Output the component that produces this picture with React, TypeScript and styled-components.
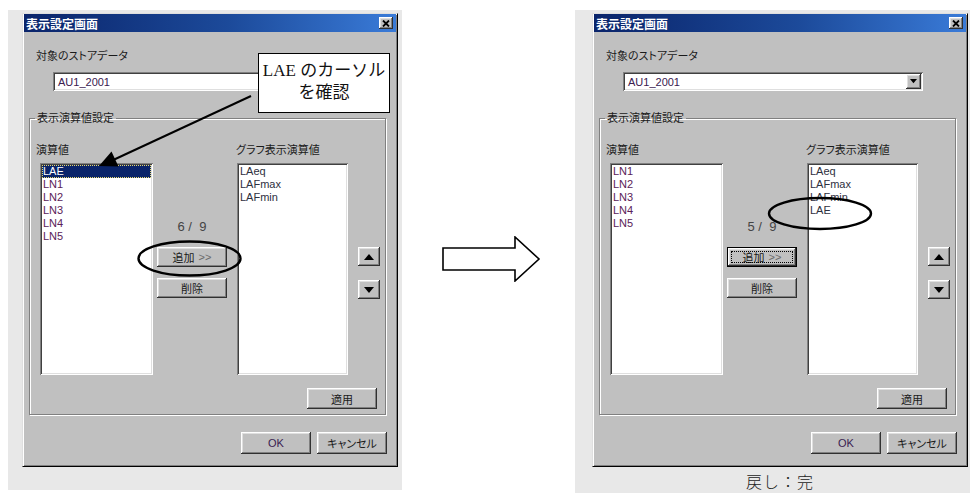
import React, { FC } from 'react';
import styled, { createGlobalStyle, css } from 'styled-components';

const uiFont = `"Liberation Sans", "Noto Sans CJK JP", sans-serif`;

const GlobalStyle = createGlobalStyle`
  body {
    margin: 0;
    background: #ffffff;
  }
`;

const Page = styled.div`
  display: flex;
  width: 970px;
  height: 493px;
  padding-top: 10px;
  box-sizing: border-box;
  overflow: hidden;
`;

const Panel = styled.div<{ $right?: boolean }>`
  display: flex;
  flex-direction: column;
  align-items: flex-start;
  box-sizing: border-box;
  background: #e8e8e8;
  ${({ $right }) =>
    $right
      ? css`
          width: 395px;
          height: 483px;
          padding: 3px 0 0 17px;
        `
      : css`
          width: 394px;
          height: 480px;
          margin-left: 8px;
          padding: 3px 0 0 14px;
        `}
`;

const Gap = styled.div`
  width: 173px;
  padding: 226px 0 0 40px;
  box-sizing: border-box;
`;

const raised = css`
  background: #c0c0c0;
  border: none;
  box-shadow: inset -1px -1px 0 #303030, inset 1px 1px 0 #ffffff, inset -2px -2px 0 #808080,
    inset 2px 2px 0 #dfdfdf;
`;

const sunken = css`
  background: #ffffff;
  box-shadow: inset 1px 1px 0 #808080, inset -1px -1px 0 #ffffff, inset 2px 2px 0 #404040,
    inset -2px -2px 0 #dfdfdf;
`;

const DialogWindow = styled.div`
  position: relative;
  width: 376px;
  height: 454px;
  box-sizing: border-box;
  background: #c0c0c0;
  border: 1px solid;
  border-color: #dfdfdf #000000 #000000 #dfdfdf;
  box-shadow: inset 1px 1px 0 #ffffff, inset -1px -1px 0 #808080;
  font-family: ${uiFont};
  font-size: 11px;
  color: #1a1a1a;
`;

const TitleBar = styled.div`
  display: flex;
  align-items: center;
  justify-content: space-between;
  height: 18px;
  margin: 0 1px;
  padding: 0 3px 0 2px;
  background: linear-gradient(90deg, #0a246a 0%, #1c4a9a 55%, #3a7bd8 100%);
`;

const TitleText = styled.span`
  color: #ffffff;
  font-size: 12px;
  font-weight: bold;
  font-feature-settings: 'palt';
`;

const CloseButton = styled.div`
  ${raised};
  display: flex;
  align-items: center;
  justify-content: center;
  width: 14px;
  height: 12px;
`;

const DialogBody = styled.div`
  display: flex;
  flex-direction: column;
  align-items: flex-start;
`;

const FieldLabel = styled.div`
  margin: 17px 0 0 13px;
  line-height: 14px;
  font-feature-settings: 'palt';
`;

const Combo = styled.div`
  ${sunken};
  display: flex;
  align-items: center;
  justify-content: space-between;
  width: 300px;
  height: 19px;
  margin: 9px 0 0 30px;
  padding: 0 2px 0 5px;
  box-sizing: border-box;
  color: #3a2050;
`;

const ComboButton = styled.div`
  ${raised};
  display: flex;
  align-items: center;
  justify-content: center;
  width: 15px;
  height: 15px;
`;

const GroupBox = styled.fieldset`
  width: 357px;
  margin: 20px 0 0 6px;
  padding: 0 0 5px 10px;
  box-sizing: border-box;
  border: 1px solid #808080;
  box-shadow: 1px 1px 0 #ffffff, inset 1px 1px 0 #ffffff;
`;

const GroupLegend = styled.legend`
  margin-left: -5px;
  padding: 0 2px;
  line-height: 14px;
  font-feature-settings: 'palt';
`;

const ListGrid = styled.div`
  display: grid;
  grid-template-columns: 113px 84px 111px 32px;
  grid-template-rows: 14px 212px auto;
  row-gap: 6px;
  margin-top: 18px;
`;

const ColumnLabel = styled.div<{ $shift: number }>`
  line-height: 14px;
  margin-left: ${({ $shift }) => $shift}px;
  white-space: nowrap;
  font-feature-settings: 'palt';
`;

const ListBox = styled.div`
  ${sunken};
  padding: 2px 2px;
  box-sizing: border-box;
`;

const ListItem = styled.div<{ $selected?: boolean; $tone: string }>`
  height: 13px;
  line-height: 13px;
  padding-left: 1px;
  color: ${({ $tone }) => $tone};
  ${({ $selected }) =>
    $selected &&
    css`
      background: #0a246a;
      color: #ffffff;
      outline: 1px dotted #e6d870;
      outline-offset: -1px;
    `}
`;

const MiddleColumn = styled.div`
  display: flex;
  flex-direction: column;
  align-items: center;
  width: 70px;
  margin-left: 4px;
`;

const Counter = styled.div`
  margin-top: 56px;
  font-size: 13px;
  line-height: 15px;
  color: #444;
  white-space: pre;
`;

const PushButton = styled.div<{ $width?: number; $height?: number; $focused?: boolean }>`
  ${raised};
  position: relative;
  display: flex;
  align-items: center;
  justify-content: center;
  gap: 4px;
  width: ${({ $width }) => $width ?? 70}px;
  height: ${({ $height }) => $height ?? 20}px;
  box-sizing: border-box;
  font-feature-settings: 'palt';
  ${({ $focused }) =>
    $focused &&
    css`
      border: 1px solid #000;
      &::after {
        content: '';
        position: absolute;
        inset: 3px;
        border: 1px dotted #000;
      }
    `}
`;

const Chevrons = styled.span`
  color: #6a6a6a;
`;

const ArrowColumn = styled.div`
  display: flex;
  flex-direction: column;
  padding-left: 10px;
`;

const ArrowButton = styled.div<{ $top: number }>`
  ${raised};
  display: flex;
  align-items: center;
  justify-content: center;
  width: 22px;
  height: 19px;
  margin-top: ${({ $top }) => $top}px;
`;

const ApplyRow = styled.div`
  grid-column: 1 / -1;
  display: flex;
  justify-content: flex-end;
  margin: 7px 3px 0 0;
`;

const Footer = styled.div`
  display: flex;
  align-self: flex-end;
  gap: 6px;
  margin: 17px 10px 0 0;
`;

const Overlay = styled.svg`
  position: absolute;
  left: 0;
  top: 0;
  overflow: visible;
  pointer-events: none;
`;

const Callout = styled.div`
  position: absolute;
  left: 235px;
  top: 39px;
  width: 132px;
  height: 60px;
  box-sizing: border-box;
  padding-top: 6px;
  background: #ffffff;
  border: 1.5px solid #000;
  font-family: "Liberation Serif", "Noto Sans CJK JP", serif;
  font-size: 17px;
  line-height: 22px;
  text-align: center;
  white-space: nowrap;
  color: #111;
`;

const Caption = styled.div`
  width: 376px;
  margin-top: 5px;
  text-align: center;
  font-family: "Noto Sans CJK JP", sans-serif;
  font-size: 16px;
  font-weight: 300;
  line-height: 18px;
  letter-spacing: 1px;
  color: #222;
`;

const Triangle: FC<{ down?: boolean; size?: number }> = ({ down, size = 10 }) => (
  <svg width={size} height={size * 0.6} viewBox="0 0 10 6">
    <polygon points={down ? '0,0 10,0 5,6' : '0,6 10,6 5,0'} fill="#000" />
  </svg>
);

interface DialogProps {
  available: string[];
  selected: string[];
  count: string;
  highlightFirst?: boolean;
  focusAdd?: boolean;
  overlay: React.ReactNode;
}

const SettingsDialog: FC<DialogProps> = ({ available, selected, count, highlightFirst, focusAdd, overlay }) => (
  <DialogWindow>
    <TitleBar>
      <TitleText>表示設定画面</TitleText>
      <CloseButton>
        <svg width="8" height="7" viewBox="0 0 8 7">
          <path d="M1 0.5 L7 6.5 M7 0.5 L1 6.5" stroke="#000" strokeWidth="1.8" />
        </svg>
      </CloseButton>
    </TitleBar>
    <DialogBody>
      <FieldLabel>対象のストアデータ</FieldLabel>
      <Combo>
        <span>AU1_2001</span>
        <ComboButton>
          <Triangle down size={7} />
        </ComboButton>
      </Combo>
      <GroupBox>
        <GroupLegend>表示演算値設定</GroupLegend>
        <ListGrid>
          <ColumnLabel $shift={-4}>演算値</ColumnLabel>
          <div />
          <ColumnLabel $shift={-1}>グラフ表示演算値</ColumnLabel>
          <div />
          <ListBox>
            {available.map((item, i) => (
              <ListItem key={item} $tone="#5a2258" $selected={highlightFirst && i === 0}>
                {item}
              </ListItem>
            ))}
          </ListBox>
          <MiddleColumn>
            <Counter>{count}</Counter>
            <PushButton $focused={focusAdd} style={{ marginTop: 13 }}>
              <span>追加</span>
              <Chevrons>&gt;&gt;</Chevrons>
            </PushButton>
            <PushButton style={{ marginTop: 11 }}>削除</PushButton>
          </MiddleColumn>
          <ListBox>
            {selected.map((item) => (
              <ListItem key={item} $tone="#2e3040">
                {item}
              </ListItem>
            ))}
          </ListBox>
          <ArrowColumn>
            <ArrowButton $top={84}>
              <Triangle />
            </ArrowButton>
            <ArrowButton $top={14}>
              <Triangle down />
            </ArrowButton>
          </ArrowColumn>
          <ApplyRow>
            <PushButton $height={21}>適用</PushButton>
          </ApplyRow>
        </ListGrid>
      </GroupBox>
      <Footer>
        <PushButton $height={22}>
          <span style={{ color: '#3a2050' }}>OK</span>
        </PushButton>
        <PushButton $height={22}>キャンセル</PushButton>
      </Footer>
    </DialogBody>
    {overlay}
  </DialogWindow>
);

const App: FC = () => (
  <>
    <GlobalStyle />
    <Page>
      <Panel>
        <SettingsDialog
          available={['LAE', 'LN1', 'LN2', 'LN3', 'LN4', 'LN5']}
          selected={['LAeq', 'LAFmax', 'LAFmin']}
          count={'6 /  9'}
          highlightFirst
          overlay={
            <>
              <Overlay width="376" height="454">
                <line x1="228" y1="82" x2="88" y2="147" stroke="#000" strokeWidth="2" />
                <polygon points="76,152 95.5,152.5 88.5,137.5" fill="#000" />
                <ellipse cx="166.5" cy="244.5" rx="51" ry="17" fill="none" stroke="#000" strokeWidth="2.4" />
              </Overlay>
              <Callout>
                LAE のカーソル
                <br />
                を確認
              </Callout>
            </>
          }
        />
      </Panel>
      <Gap>
        <svg width="100" height="46" viewBox="0 0 100 46">
          <polygon
            points="1,12 73,12 73,1 97,23 73,45 73,34 1,34"
            fill="#fff"
            stroke="#000"
            strokeWidth="1.6"
            strokeLinejoin="miter"
          />
        </svg>
      </Gap>
      <Panel $right>
        <SettingsDialog
          available={['LN1', 'LN2', 'LN3', 'LN4', 'LN5']}
          selected={['LAeq', 'LAFmax', 'LAFmin', 'LAE']}
          count={'5 /  9'}
          focusAdd
          overlay={
            <Overlay width="376" height="454">
              <ellipse cx="227" cy="199.5" rx="51" ry="15.5" fill="none" stroke="#000" strokeWidth="2.4" />
            </Overlay>
          }
        />
        <Caption>戻し：完</Caption>
      </Panel>
    </Page>
  </>
);

export default App;
